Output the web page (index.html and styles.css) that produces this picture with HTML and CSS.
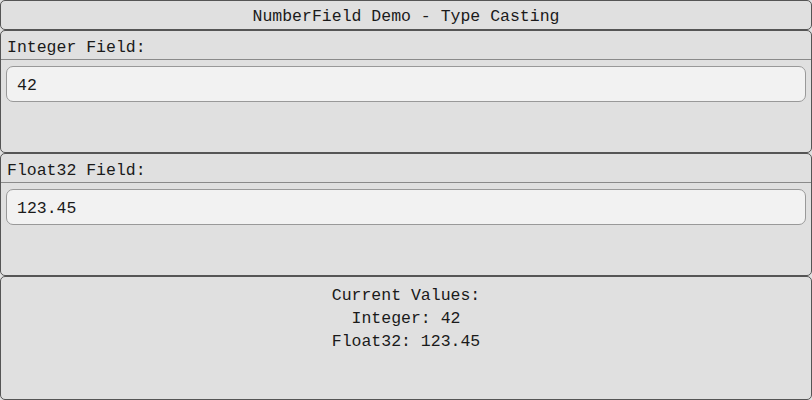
FILE: index.html
```html
<!DOCTYPE html>
<html>
<head>
<meta charset="utf-8">
<link rel="stylesheet" href="styles.css">
</head>
<body>
<div class="app">
  <div class="panel title">NumberField Demo - Type Casting</div>
  <div class="panel field-panel">
    <div class="field-header">Integer Field:</div>
    <div class="field-body">
      <div class="input">42</div>
    </div>
  </div>
  <div class="panel field-panel">
    <div class="field-header">Float32 Field:</div>
    <div class="field-body">
      <div class="input">123.45</div>
    </div>
  </div>
  <div class="panel summary">
    <div class="line">Current Values:</div>
    <div class="line">Integer: 42</div>
    <div class="line">Float32: 123.45</div>
  </div>
</div>
</body>
</html>
```
FILE: styles.css
```css
html, body {
  margin: 0;
  padding: 0;
  background: #e0e0e0;
}
body {
  font-family: "Liberation Mono", "DejaVu Sans Mono", monospace;
  font-size: 16.5px;
  color: #1a1a1a;
}
.app {
  width: 812px;
  height: 400px;
  display: flex;
  flex-direction: column;
}
.panel {
  box-sizing: border-box;
  background: #e0e0e0;
  border: 1px solid #555;
  border-radius: 5px;
}
.title {
  height: 30px;
  display: flex;
  align-items: center;
  justify-content: center;
  padding-top: 3px;
}
.field-panel {
  height: 123px;
  display: flex;
  flex-direction: column;
}
.field-header {
  height: 29px;
  box-sizing: border-box;
  border-bottom: 1px solid #8a8a8a;
  padding: 7px 0 0 6px;
}
.field-body {
  padding: 6px 5px 0 5px;
}
.input {
  height: 36px;
  box-sizing: border-box;
  background: #f2f2f2;
  border: 1px solid #999;
  border-radius: 7px;
  display: flex;
  align-items: center;
  padding: 3px 0 0 10px;
}
.summary {
  flex: 1;
  display: flex;
  flex-direction: column;
  align-items: center;
  padding-top: 7px;
}
.line {
  height: 23px;
  line-height: 23px;
}
```
